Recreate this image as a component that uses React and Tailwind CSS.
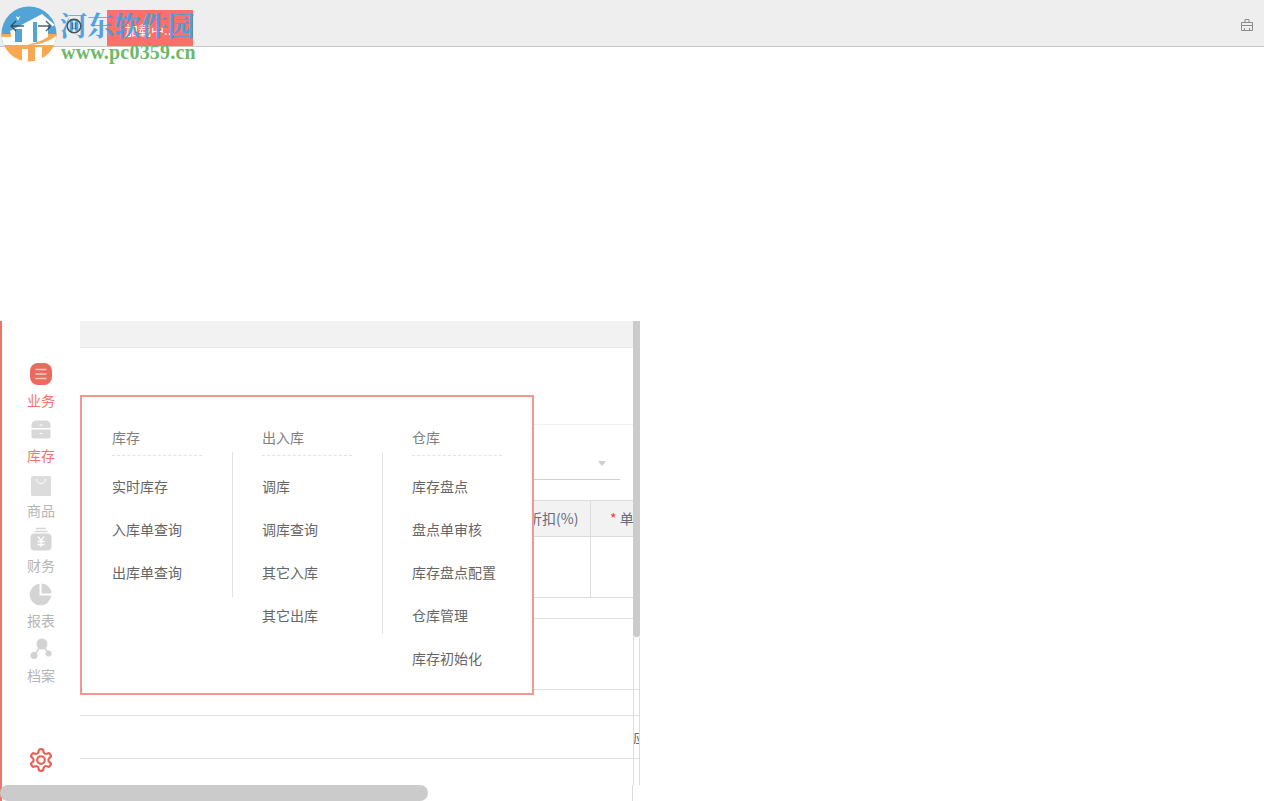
import React from "react";

const CJK = "font-['Noto_Sans_CJK_SC','Noto_Sans',sans-serif]";

function Doc({ children, size = 24 }) {
  return <svg width={size} height={size} viewBox="0 0 24 24">{children}</svg>;
}

const icons = {
  biz: (
    <Doc>
      <rect x="1" y="1" width="22" height="22" rx="8" fill="#ea6a5e" />
      <path d="M6.500 7.500h11M6.500 12h11M6.500 16.500h11" stroke="#f8c9c3" strokeWidth="1.300" />
    </Doc>
  ),
  stock: (
    <Doc>
      <path d="M7 3.500h10a5 5 0 0 1 4.500 4v3.500h-19V7.500A5 5 0 0 1 7 3.500z" fill="#d8d8d8" />
      <path d="M2.500 12.500h19V19.500a2 2 0 0 1-2 2h-15a2 2 0 0 1-2-2z" fill="#d8d8d8" />
      <path d="M10.500 8h3M10.500 16.500h3" stroke="#fff" strokeWidth="1" />
    </Doc>
  ),
  goods: (
    <Doc>
      <rect x="2" y="4" width="20" height="20" rx="1.500" fill="#dcdcdc" />
      <path d="M7.500 7c0 6 9 6 9 0" fill="none" stroke="#fff" strokeWidth="1" />
    </Doc>
  ),
  finance: (
    <Doc>
      <path d="M7 1.500h10M5.500 4.500h13" stroke="#d6d6d6" strokeWidth="1.500" />
      <rect x="1.500" y="6.500" width="21" height="17" rx="4" fill="#d6d6d6" />
      <path d="M9 9.500l3 4 3-4M12 13.500v6.500M8.500 14.500h7M8.500 17.500h7" fill="none" stroke="#fff" strokeWidth="1.300" />
    </Doc>
  ),
  report: (
    <Doc>
      <path d="M10.500 1.800a10.800 10.800 0 1 0 11.700 11.700H10.500z" fill="#d4d4d4" />
      <path d="M12.500 1.500a10 10 0 0 1 10 10h-10z" fill="#d4d4d4" />
    </Doc>
  ),
  archive: (
    <Doc>
      <circle cx="13" cy="7" r="5.500" fill="#d2d2d2" />
      <circle cx="5" cy="18.500" r="3.500" fill="#d2d2d2" />
      <circle cx="19.500" cy="16.500" r="3" fill="#d2d2d2" />
      <path d="M11 10L6 17M15 10l3.500 5" stroke="#d2d2d2" strokeWidth="1.500" />
    </Doc>
  ),
};

const nav = [
  ["biz", "业务", true],
  ["stock", "库存", true],
  ["goods", "商品", false],
  ["finance", "财务", false],
  ["report", "报表", false],
  ["archive", "档案", false],
];

const columns = [
  { title: "库存", items: ["实时库存", "入库单查询", "出库单查询"], divider: "h-[145px]" },
  { title: "出入库", items: ["调库", "调库查询", "其它入库", "其它出库"], divider: "h-[182px]" },
  { title: "仓库", items: ["库存盘点", "盘点单审核", "库存盘点配置", "仓库管理", "库存初始化"], divider: "" },
];

function Sidebar() {
  return (
    <aside className="relative flex h-full w-20 shrink-0 flex-col items-center border-l-2 border-[#ee7369] pt-[41px]">
      {nav.map(([key, label, active]) => (
        <div key={label} className="flex h-[55px] w-full flex-col items-center">
          <div className="h-6">{icons[key]}</div>
          <span className={`mt-[4px] text-[14px] leading-[20px] ${active ? "text-[#f4736a]" : "text-[#b5b5b5]"}`}>{label}</span>
        </div>
      ))}
      <svg className="mt-[55px]" width="26" height="26" viewBox="0 0 24 24" fill="none" stroke="#ea5f58" strokeWidth="2" strokeLinecap="round" strokeLinejoin="round">
        <path d="M12.220 2h-.440a2 2 0 0 0-2 2v.180a2 2 0 0 1-1 1.730l-.430.250a2 2 0 0 1-2 0l-.150-.080a2 2 0 0 0-2.730.730l-.220.380a2 2 0 0 0 .730 2.730l.150.100a2 2 0 0 1 1 1.720v.510a2 2 0 0 1-1 1.740l-.150.090a2 2 0 0 0-.730 2.730l.220.380a2 2 0 0 0 2.730.730l.150-.080a2 2 0 0 1 2 0l.430.250a2 2 0 0 1 1 1.730V20a2 2 0 0 0 2 2h.440a2 2 0 0 0 2-2v-.180a2 2 0 0 1 1-1.730l.430-.250a2 2 0 0 1 2 0l.150.080a2 2 0 0 0 2.730-.730l.220-.390a2 2 0 0 0-.730-2.730l-.150-.080a2 2 0 0 1-1-1.740v-.500a2 2 0 0 1 1-1.740l.150-.090a2 2 0 0 0 .730-2.730l-.220-.380a2 2 0 0 0-2.730-.730l-.150.080a2 2 0 0 1-2 0l-.430-.250a2 2 0 0 1-1-1.730V4a2 2 0 0 0-2-2z" />
        <circle cx="12" cy="12" r="3.500" />
      </svg>
    </aside>
  );
}

function Menu() {
  return (
    <div className="absolute left-20 top-[74px] flex h-[300px] w-[454px] border-2 border-[#f59791] bg-white pl-[30px] pt-[30px]">
      {columns.map((c) => (
        <div key={c.title} className="relative w-[150px] shrink-0">
          <div className="h-[29px] w-[90px] border-b border-dashed border-[#e3e3e3] text-[14px] leading-[20px] text-[#808080]">{c.title}</div>
          <ul className="pt-[9px]">
            {c.items.map((i) => (
              <li key={i} className="h-[43px] whitespace-nowrap text-[14px] leading-[43px] text-[#666666]">{i}</li>
            ))}
          </ul>
          {c.divider && <div className={`absolute left-[120px] top-[25px] w-px bg-[#e2e2e2] ${c.divider}`} />}
        </div>
      ))}
    </div>
  );
}

function Content() {
  return (
    <main className="relative flex h-full w-[559px] shrink-0 flex-col">
      <div className="mr-[6px] h-[27px] shrink-0 border-b border-[#ececec] bg-[#f2f2f2]" />
      <div className="mr-[6px] h-[77px] shrink-0 border-b border-[#efefef]" />
      <div className="mr-[6px] flex h-[75px] shrink-0 justify-end pr-[13px]">
        <div className="relative h-[55px] w-[120px] border-b border-[#cfcfcf]">
          <span className="absolute right-[14px] top-[36px] h-0 w-0 border-x-[4px] border-t-[5px] border-x-transparent border-t-[#cfcfcf]" />
        </div>
      </div>
      <div className="mr-[6px] flex h-[37px] shrink-0 justify-end overflow-hidden border-y border-[#dcdcdc] bg-[#f2f2f2] text-[14px] leading-[35px] text-[#666b7a]">
        <div className="w-[62px] pr-[12px] text-right whitespace-nowrap">折扣(%)</div>
        <div className="w-[43px] shrink-0 overflow-hidden whitespace-nowrap border-l border-[#dcdcdc] pl-[19px]"><span className="text-[#f03a3a]">*</span> 单价</div>
      </div>
      <div className="mr-[6px] flex h-[61px] shrink-0 justify-end border-b border-[#dcdcdc]"><div className="w-[43px] border-l border-[#dcdcdc]" /></div>
      <div className="mr-[6px] h-[21px] shrink-0 border-b border-[#e2e2e2]" />
      <div className="h-[71px] shrink-0 border-b border-[#e2e2e2]" />
      <div className="h-[26px] shrink-0 border-b border-[#e2e2e2]" />
      <div className="flex h-[43px] shrink-0 items-center justify-end overflow-hidden border-b border-[#e2e2e2]">
        <span className="w-[6px] shrink-0 overflow-hidden text-[14px] leading-none whitespace-nowrap text-[#666b7a]">应收</span>
      </div>
      <div className="flex-1" />
    </main>
  );
}

export default function App() {
  return (
    <div className={`relative flex h-[801px] w-[1264px] flex-col overflow-hidden bg-white ${CJK}`}>
      <header className="flex h-[47px] shrink-0 items-center border-b border-[#c8c8c8] bg-[#eeeeee] pl-[10px]">
        <svg className="relative z-10 mt-[6px] opacity-80" width="14" height="12" viewBox="0 0 14 12" fill="none" stroke="#24404f" strokeWidth="1.400">
          <path d="M14 6H1M6 1L1 6l5 5" />
        </svg>
        <svg className="relative z-10 ml-[14px] mt-[6px] opacity-80" width="14" height="12" viewBox="0 0 14 12" fill="none" stroke="#24404f" strokeWidth="1.400">
          <path d="M0 6h13M8 1l5 5-5 5" />
        </svg>
        <svg className="relative z-10 ml-[14px] mt-[6px]" width="16" height="16" viewBox="0 0 16 16" fill="none" stroke="#4a5058" strokeWidth="1.500">
          <circle cx="8" cy="8" r="6.800" />
          <path d="M6.500 4.500v7M9.500 4.500v7" stroke="#3f6f9a" />
        </svg>
        <span className="ml-[25px] flex h-[36px] w-[86px] items-center justify-center self-end bg-[#fb7069] pt-1 text-[13px] text-white">加载中...</span>
        <svg className="ml-auto mr-[10px] mt-[4px]" width="14" height="14" viewBox="0 0 14 14" fill="none" stroke="#8a8a8a">
          <path d="M5 4.500V1.500h4v3M1.500 4.500h11v8h-11zM1.500 7.500h11M4.500 10v2.500M9.500 10v2.500" />
        </svg>
      </header>
      <div className="h-[274px] shrink-0" />
      <section className="relative flex h-[480px] w-[640px] shrink-0">
        <Sidebar />
        <Content />
        <Menu />
        <div className="absolute left-[633px] top-0 h-[316px] w-[7px] rounded-b-[3px] bg-[#cbcbcb]" />
        <div className="absolute left-[633px] top-[316px] h-[148px] w-px bg-[#dcdcdc]" />
        <div className="absolute left-[639px] top-[316px] h-[148px] w-px bg-[#dcdcdc]" />
        <div className="absolute left-0 top-[464px] h-4 w-[428px] rounded-full bg-[#cbcbcb]" />
        <div className="absolute left-[632px] top-[464px] h-4 w-px bg-[#dcdcdc]" />
      </section>

      {/* watermark logo */}
      <div className="absolute left-0 top-0 h-[66px] w-[200px]">
        <svg className="absolute left-0 top-0" width="60" height="64" viewBox="0 0 60 64">
          <defs><clipPath id="lc"><circle cx="29" cy="34" r="27.500" /></clipPath></defs>
          <g clipPath="url(#lc)">
            <rect width="60" height="42" fill="#52a3d6" />
            <rect y="34" width="60" height="30" fill="#f8a851" />
            <path d="M0 36q12 8 28 9q18 0 32-12v12H0z" fill="#fff" />
            <path d="M0 37q12 8 28 8l6-3V36z" fill="#fff" />
            <path d="M10 31L42 14l13 11-4 2-3-2v12q-10 6-20 7q-8 0-16-5z" fill="#fff" />
            <path d="M15 29h7v13h-7zM33 22h4v20h-4z" fill="#52a3d6" />
            <path d="M16 16l2 1.500 2-1.500-1 3-1 1.500-1-1.500z" fill="#fff" />
            <path d="M22 49h6v15h-6zM35 47h7v17h-7z" fill="#fff" />
          </g>
        </svg>
        <div className="absolute left-[60px] top-[7px] whitespace-nowrap font-['Noto_Serif_CJK_SC','Noto_Sans_CJK_SC',serif] text-[27px] font-bold leading-[36px] text-[#4a9fe0] opacity-95">河东软件园</div>
        <div className="absolute left-[61px] top-[42px] whitespace-nowrap font-['Liberation_Serif',serif] text-[20px] font-bold leading-[20px] tracking-[0.2px] text-[#6cb96a]">www.pc0359.cn</div>
      </div>
    </div>
  );
}
